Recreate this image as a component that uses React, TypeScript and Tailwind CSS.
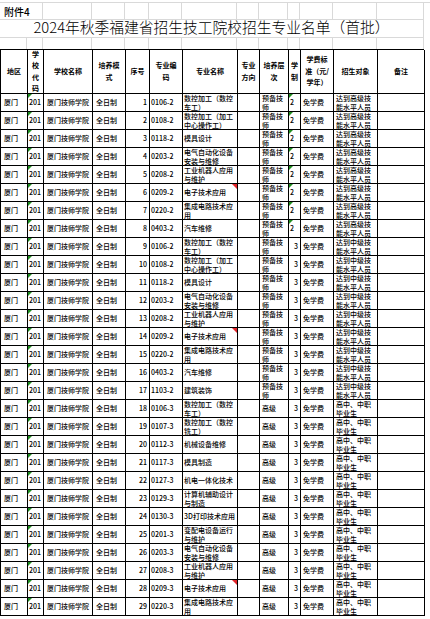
import React from "react";

const GRID =
  "grid grid-cols-[27px_16px_49px_33px_24px_33px_55px_22px_29px_12px_33px_44px_47px]";
const FONT = "font-['Noto_Sans_CJK_SC','Liberation_Sans',sans-serif]";

const majors: [string, string][] = [
  ["0106-2", "数控加工（数控\n车工）"],
  ["0108-2", "数控加工（加工\n中心操作工）"],
  ["0118-2", "模具设计"],
  ["0203-2", "电气自动化设备\n安装与维修"],
  ["0208-2", "工业机器人应用\n与维护"],
  ["0209-2", "电子技术应用"],
  ["0220-2", "集成电路技术应\n用"],
  ["0403-2", "汽车维修"],
  ["0106-2", "数控加工（数控\n车工）"],
  ["0108-2", "数控加工（加工\n中心操作工）"],
  ["0118-2", "模具设计"],
  ["0203-2", "电气自动化设备\n安装与维修"],
  ["0208-2", "工业机器人应用\n与维护"],
  ["0209-2", "电子技术应用"],
  ["0220-2", "集成电路技术应\n用"],
  ["0403-2", "汽车维修"],
  ["1103-2", "建筑装饰"],
  ["0106-3", "数控加工（数控\n车工）"],
  ["0107-3", "数控加工（数控\n铣工）"],
  ["0112-3", "机械设备维修"],
  ["0117-3", "模具制造"],
  ["0127-3", "机电一体化技术"],
  ["0129-3", "计算机辅助设计\n与制造"],
  ["0130-3", "3D打印技术应用"],
  ["0201-3", "变配电设备运行\n与维护"],
  ["0203-3", "电气自动化设备\n安装与维修"],
  ["0208-3", "工业机器人应用\n与维护"],
  ["0209-3", "电子技术应用"],
  ["0220-3", "集成电路技术应\n用"],
];

const headers: string[] = [
  "地区",
  "学\n校\n代\n码",
  "学校名称",
  "培养模\n式",
  "序号",
  "专业编\n码",
  "专业名称",
  "专业\n方向",
  "培养层\n次",
  "学\n制",
  "学费标\n准（元/\n学年）",
  "招生对象",
  "备注",
];

function Cell({
  children,
  className = "",
}: {
  children?: React.ReactNode;
  className?: string;
}) {
  return (
    <div
      className={`relative flex items-center overflow-hidden whitespace-pre border-r border-b border-black ${className}`}
    >
      {children}
    </div>
  );
}

function GreenMark() {
  return (
    <span className="absolute left-0 top-0 h-0 w-0 border-t-[4px] border-r-[4px] border-t-[#1f8f1f] border-r-transparent" />
  );
}

function RedMark() {
  return (
    <span className="absolute right-0 top-0 h-0 w-0 border-t-[5px] border-l-[5px] border-t-[#e3262b] border-l-transparent" />
  );
}

export default function App() {
  return (
    <div className={`h-[619px] w-[430px] overflow-hidden bg-white pt-[2px] text-black ${FONT}`}>
      {/* sheet rows above the table */}
      <div className={`${GRID} h-[16px] border-t border-[#d9d9d9]`}>
        <div className="col-span-2 flex items-center border-r border-b border-[#d9d9d9] pl-[4px] pt-[1px] text-[10px] font-medium whitespace-nowrap">
          附件4
        </div>
        {Array.from({ length: 11 }).map((_, i) => (
          <div key={i} className="border-r border-b border-[#d9d9d9]" />
        ))}
      </div>
      <div className="flex h-[20px] w-[424px] items-center justify-center border-r border-b border-[#d9d9d9] text-[14.75px] font-light leading-none whitespace-nowrap">
        2024年秋季福建省招生技工院校招生专业名单（首批）
      </div>
      <div className={`${GRID} h-[11px]`}>
        {Array.from({ length: 13 }).map((_, i) => (
          <div key={i} className="border-r border-[#d9d9d9]" />
        ))}
      </div>

      {/* table */}
      <div className="w-[424px] border-t border-l border-black">
        <div className={`${GRID} h-[44px]`}>
          {headers.map((h, i) => (
            <Cell
              key={i}
              className="justify-center text-center text-[7px] font-bold leading-[11.5px]"
            >
              {h}
            </Cell>
          ))}
        </div>

        {majors.map(([code, name], i) => {
          const no = i + 1;
          const prep = no <= 17;
          const years = no <= 8 ? 2 : 3;
          const target =
            no <= 8
              ? "达到高级技\n能水平人员"
              : prep
              ? "达到中级技\n能水平人员"
              : "高中、中职\n毕业生";
          const flagged = name === "电子技术应用";
          return (
            <div
              key={no}
              className={`${GRID} h-[18px] text-[7px] font-medium leading-[9px]`}
            >
              <Cell className="pl-[3px]">厦门</Cell>
              <Cell className="pl-[1px]">
                <GreenMark />
                201
              </Cell>
              <Cell className="pl-[3px]">厦门技师学院</Cell>
              <Cell className="pl-[3px]">全日制</Cell>
              <Cell className="justify-end pr-[2px]">{no}</Cell>
              <Cell className="pl-[1px]">{code}</Cell>
              <Cell className="pl-[1px]">
                {flagged && <RedMark />}
                {name}
              </Cell>
              <Cell />
              <Cell className="pl-[2px]">{prep ? "预备技\n师" : "高级"}</Cell>
              {years === 2 ? (
                <Cell className="pl-[1px]">
                  <GreenMark />2
                </Cell>
              ) : (
                <Cell className="justify-end pr-[2px]">3</Cell>
              )}
              <Cell className="pl-[2px]">免学费</Cell>
              <Cell className="pl-[2px]">{target}</Cell>
              <Cell />
            </div>
          );
        })}
      </div>
    </div>
  );
}
